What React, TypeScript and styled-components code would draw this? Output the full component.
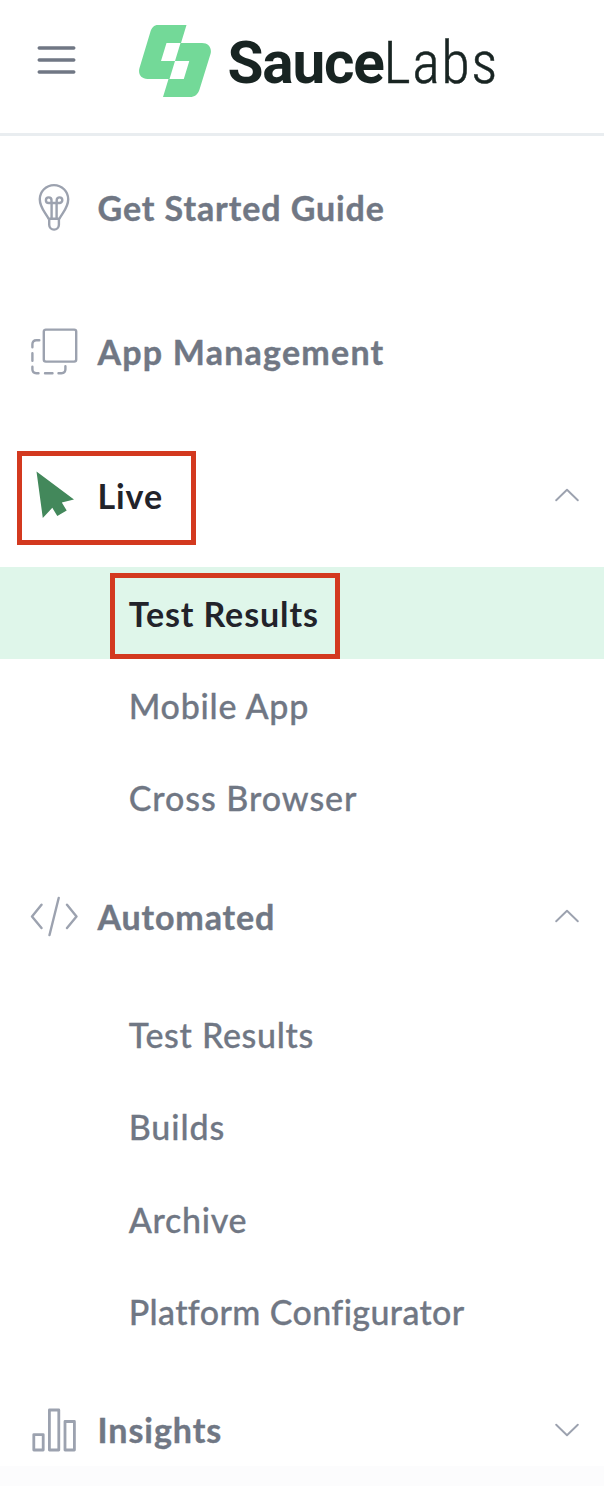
import React from "react";
import styled, { createGlobalStyle, css } from "styled-components";

const GlobalStyle = createGlobalStyle`
  *, *::before, *::after { box-sizing: border-box; }
  body {
    margin: 0;
    background: #fcfcfd;
    font-family: Lato, "Open Sans", sans-serif;
    -webkit-font-smoothing: antialiased;
  }
`;

const colors = {
  text: "#707784",
  icon: "#9ca2af",
  dark: "#22232a",
  brand: "#73d998",
  brandInk: "#182422",
  active: "#dff6ea",
  cursor: "#43885b",
  outline: "#d3391f",
};

const Sidebar = styled.nav`
  display: flex;
  flex-direction: column;
  height: 1466px;
  background: #fff;
  overflow: hidden;
`;

const Header = styled.header`
  display: flex;
  flex: none;
  align-items: flex-start;
  height: 136px;
  margin-bottom: -1px;
  border-bottom: 3px solid #e9edf0;
`;

const MenuButton = styled.button`
  display: flex;
  margin: 45px 0 0 37px;
  padding: 0;
  border: 0;
  background: none;
  cursor: pointer;
`;

const Logo = styled.a`
  display: flex;
  align-items: flex-start;
  margin: 25px 0 0 61.5px;
  color: ${colors.brandInk};
`;

const Wordmark = styled.span`
  display: flex;
  margin: 3px 0 0 16px;
  font-family: Roboto, sans-serif;
  font-size: 58.5px;
  line-height: 70px;
  white-space: nowrap;
`;

const WordBold = styled.span`
  width: 156px;
  font-weight: 700;
  letter-spacing: -1.2px;
`;

const WordLight = styled.span`
  font-weight: 300;
  font-stretch: 87%;
  letter-spacing: 1.5px;
  -webkit-text-stroke: 0.5px currentColor;
`;

const Section = styled.section`
  flex: none;
`;

const SectionRow = styled.div<{ $dark?: boolean }>`
  position: relative;
  display: flex;
  align-items: center;
  height: 144px;
  padding: 0 25px 0 30px;
  color: ${(p) => (p.$dark ? colors.dark : colors.text)};
`;

const IconSlot = styled.span`
  display: flex;
  flex: none;
  width: 48px;
  height: 48px;
  margin-right: 19.5px;
`;

const label = css<{ $track: number }>`
  font-size: 34px;
  line-height: 42px;
  letter-spacing: ${(p) => p.$track}px;
  white-space: nowrap;
`;

const SectionLabel = styled.span<{ $track: number; $dark?: boolean }>`
  ${label}
  flex: 1;
  padding-top: 1.2px;
  font-weight: 700;
  -webkit-text-stroke: ${(p) => (p.$dark ? 0 : 0.4)}px currentColor;
`;

const Chevron = styled.svg<{ $down?: boolean }>`
  flex: none;
  width: 24px;
  height: 14px;
  transform: ${(p) => (p.$down ? "scaleY(-1)" : "none")};
`;

const SubList = styled.ul`
  margin: 0;
  padding: 0;
  list-style: none;
`;

const SubItem = styled.li<{ $track: number; $active?: boolean }>`
  ${label}
  position: relative;
  display: flex;
  align-items: center;
  height: 92.4px;
  padding: 0.9px 0 0 128.7px;
  font-weight: ${(p) => (p.$active ? 700 : 500)};
  -webkit-text-stroke: ${(p) => (p.$active ? 0 : 0.3)}px currentColor;
  color: ${(p) => (p.$active ? colors.dark : colors.text)};
  background: ${(p) => (p.$active ? colors.active : "transparent")};
`;

const Callout = styled.span<{ $x: number; $y: number; $w: number; $h: number }>`
  position: absolute;
  left: ${(p) => p.$x}px;
  top: ${(p) => p.$y}px;
  width: ${(p) => p.$w}px;
  height: ${(p) => p.$h}px;
  border: 5px solid ${colors.outline};
  pointer-events: none;
`;

const stroke = {
  fill: "none",
  stroke: colors.icon,
  strokeWidth: 2.4,
  strokeLinecap: "round" as const,
  strokeLinejoin: "round" as const,
};

const MenuIcon = () => (
  <svg width="40" height="30" viewBox="0 0 40 30" stroke="#707784" strokeWidth="3.4" strokeLinecap="round">
    <path d="M2.2 3H36.8M2.2 15H36.8M2.2 27H36.8" />
  </svg>
);

const LogoMark = () => (
  <svg width="73" height="72" viewBox="0 0 73 72" fill={colors.brand} fillRule="evenodd">
    <path d="M19 0H47.5L42 18H63C69.500 18 73.200 23 71.500 29L60.500 64.500C59 69.500 55.500 72 51 72H24L29.500 54H8.500C2 54 -1.200 49 .5 43L11.200 7.500C12.600 2.500 15 0 19 0ZM27.500 18L22 36H36L41.500 18ZM36 36L30.500 54H44.800L50.300 36Z" />
  </svg>
);

const BulbIcon = () => (
  <svg width="48" height="48" viewBox="0 -0.5 48 48" {...stroke}>
    <path d="M18.600 35.200C15.500 29 9.800 24.500 9.800 15.800A14.200 14.200 0 0 1 38.200 15.800C38.200 24.500 32.500 29 29.400 35.200ZM19.200 35.400V41.300A4.850 4.850 0 0 0 28.900 41.300V35.400" />
    <path d="M21.600 34.500V19.500M26.600 34.500V19.500M21.600 19.500H18.700A2.800 2.800 0 1 1 21.500 16.700V19.500M21.600 19.500H26.600M26.600 19.500H29.500A2.800 2.800 0 1 0 26.700 16.700V19.500" />
  </svg>
);

const AppsIcon = () => (
  <svg width="48" height="48" viewBox="0 -0.3 48 48" {...stroke}>
    <rect x="13.800" y="2.300" width="32.400" height="32" rx="2" />
    <path d="M9.300 13H6.300Q2.400 13 2.400 17V20M2.400 26V33.500M2.400 39.500V42Q2.400 45.900 6.300 45.900H8.500M15 45.900H22.500M28.500 45.900H31.500Q35.400 45.900 35.400 42V39" />
  </svg>
);

const CursorIcon = () => (
  <svg width="48" height="48" viewBox="0 0 48 48" fill={colors.cursor}>
    <path d="M6.500 .5L44 28.500L31.800 31.500L36.700 39.500L27.300 45L22.300 36.800L12.800 47Z" />
  </svg>
);

const CodeIcon = () => (
  <svg width="48" height="48" viewBox="0 0 48 48" {...stroke}>
    <path d="M11.500 12.800L2 24.500L11.500 36M37 12.800L46.500 24.500L37 36M28.700 6L19.500 43" />
  </svg>
);

const BarsIcon = () => (
  <svg width="48" height="48" viewBox="0 0 48 48" {...stroke} strokeWidth={2.8}>
    <rect x="3.800" y="28.600" width="9.400" height="15.400" />
    <rect x="19.400" y="4" width="9.400" height="40" />
    <rect x="35" y="15.500" width="9.400" height="28.500" />
  </svg>
);

interface Entry {
  name: string;
  track: number;
  active?: boolean;
}

interface Group extends Entry {
  icon: React.ReactNode;
  chevron?: "up" | "down";
  items?: Entry[];
}

const groups: Group[] = [
  { name: "Get Started Guide", track: 0.92, icon: <BulbIcon /> },
  { name: "App Management", track: 1.22, icon: <AppsIcon /> },
  {
    name: "Live",
    track: 0.9,
    active: true,
    icon: <CursorIcon />,
    chevron: "up",
    items: [
      { name: "Test Results", track: 0.9, active: true },
      { name: "Mobile App", track: 0.75 },
      { name: "Cross Browser", track: 0.95 },
    ],
  },
  {
    name: "Automated",
    track: 0.85,
    icon: <CodeIcon />,
    chevron: "up",
    items: [
      { name: "Test Results", track: 0.7 },
      { name: "Builds", track: 0.9 },
      { name: "Archive", track: 0.7 },
      { name: "Platform Configurator", track: 0.38 },
    ],
  },
  { name: "Insights", track: 0.95, icon: <BarsIcon />, chevron: "down" },
];

export default function App() {
  return (
    <>
      <GlobalStyle />
      <Sidebar>
        <Header>
          <MenuButton aria-label="Menu">
            <MenuIcon />
          </MenuButton>
          <Logo>
            <LogoMark />
            <Wordmark>
              <WordBold>Sauce</WordBold>
              <WordLight>Labs</WordLight>
            </Wordmark>
          </Logo>
        </Header>
        {groups.map((group) => (
          <Section key={group.name}>
            <SectionRow $dark={group.active}>
              <IconSlot>{group.icon}</IconSlot>
              <SectionLabel $track={group.track} $dark={group.active}>
                {group.name}
              </SectionLabel>
              {group.chevron && (
                <Chevron viewBox="0 0 24 14" $down={group.chevron === "down"} {...stroke} strokeWidth={1.9}>
                  <path d="M1.200 12.300L12 1.800L22.800 12.300" />
                </Chevron>
              )}
              {group.active && <Callout $x={17} $y={28} $w={179.4} $h={94} />}
            </SectionRow>
            {group.items && (
              <SubList>
                {group.items.map((item) => (
                  <SubItem key={item.name} $track={item.track} $active={item.active}>
                    {item.name}
                    {item.active && <Callout $x={110.4} $y={6} $w={229.6} $h={86} />}
                  </SubItem>
                ))}
              </SubList>
            )}
          </Section>
        ))}
      </Sidebar>
    </>
  );
}
